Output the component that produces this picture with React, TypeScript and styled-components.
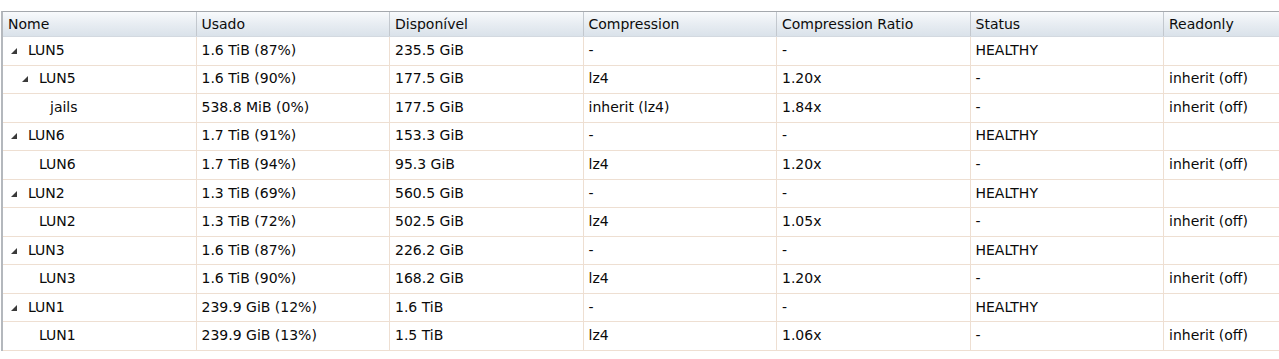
import React from "react";
import styled, { createGlobalStyle } from "styled-components";

type Node = {
  name: string;
  level: number;
  expandable: boolean;
  used: string;
  avail: string;
  compression: string;
  ratio: string;
  status: string;
  readonly: string;
};

const rows: Node[] = [
  { name: "LUN5", level: 0, expandable: true, used: "1.6 TiB (87%)", avail: "235.5 GiB", compression: "-", ratio: "-", status: "HEALTHY", readonly: "" },
  { name: "LUN5", level: 1, expandable: true, used: "1.6 TiB (90%)", avail: "177.5 GiB", compression: "lz4", ratio: "1.20x", status: "-", readonly: "inherit (off)" },
  { name: "jails", level: 2, expandable: false, used: "538.8 MiB (0%)", avail: "177.5 GiB", compression: "inherit (lz4)", ratio: "1.84x", status: "-", readonly: "inherit (off)" },
  { name: "LUN6", level: 0, expandable: true, used: "1.7 TiB (91%)", avail: "153.3 GiB", compression: "-", ratio: "-", status: "HEALTHY", readonly: "" },
  { name: "LUN6", level: 1, expandable: false, used: "1.7 TiB (94%)", avail: "95.3 GiB", compression: "lz4", ratio: "1.20x", status: "-", readonly: "inherit (off)" },
  { name: "LUN2", level: 0, expandable: true, used: "1.3 TiB (69%)", avail: "560.5 GiB", compression: "-", ratio: "-", status: "HEALTHY", readonly: "" },
  { name: "LUN2", level: 1, expandable: false, used: "1.3 TiB (72%)", avail: "502.5 GiB", compression: "lz4", ratio: "1.05x", status: "-", readonly: "inherit (off)" },
  { name: "LUN3", level: 0, expandable: true, used: "1.6 TiB (87%)", avail: "226.2 GiB", compression: "-", ratio: "-", status: "HEALTHY", readonly: "" },
  { name: "LUN3", level: 1, expandable: false, used: "1.6 TiB (90%)", avail: "168.2 GiB", compression: "lz4", ratio: "1.20x", status: "-", readonly: "inherit (off)" },
  { name: "LUN1", level: 0, expandable: true, used: "239.9 GiB (12%)", avail: "1.6 TiB", compression: "-", ratio: "-", status: "HEALTHY", readonly: "" },
  { name: "LUN1", level: 1, expandable: false, used: "239.9 GiB (13%)", avail: "1.5 TiB", compression: "lz4", ratio: "1.06x", status: "-", readonly: "inherit (off)" },
];

const columns = ["Nome", "Usado", "Disponível", "Compression", "Compression Ratio", "Status", "Readonly"];

const GlobalStyle = createGlobalStyle`
  html, body {
    margin: 0;
    padding: 0;
    background: #fff;
    overflow: hidden;
  }
  body {
    font-family: "DejaVu Sans", Verdana, sans-serif;
    font-size: 14px;
    color: #0a0a0a;
  }
`;

const Wrapper = styled.div`
  padding-top: 11px;
  padding-left: 1px;
`;

const Grid = styled.div`
  border-left: 2px solid #b4b8bd;
  border-top: 1px solid #a4a8ad;
  width: 1278px;
`;

const template = "repeat(6, 193.5px) 1fr";

const HeaderRow = styled.div`
  display: grid;
  grid-template-columns: ${template};
  height: 24px;
  background: linear-gradient(to bottom, #f8fafc 0%, #e9eef3 45%, #dae2ea 100%);
  border-bottom: 1px solid #d3d9e0;
`;

const HeaderCell = styled.div`
  display: flex;
  align-items: center;
  padding-left: 5px;
  padding-bottom: 1px;
  border-right: 1px solid #c3c8ce;
  white-space: nowrap;
  overflow: hidden;
  color: #0c0c0c;

  &:last-child {
    border-right: none;
  }
`;

const Row = styled.div`
  display: grid;
  grid-template-columns: ${template};
  height: 28.55px;
  box-sizing: border-box;
  border-bottom: 1px solid #eedfd2;
`;

const Cell = styled.div`
  display: flex;
  align-items: center;
  padding-left: 5px;
  padding-bottom: 2px;
  border-right: 1px solid #eedfd2;
  white-space: nowrap;
  overflow: hidden;

  &:last-child {
    border-right: none;
  }
`;

const TreeCell = styled(Cell)<{ $level: number }>`
  padding-left: ${(p) => 8 + p.$level * 11}px;
`;

const Expander = styled.span`
  display: inline-flex;
  width: 17px;
  flex: none;
  align-items: center;
  padding-top: 2px;
`;

const Triangle = () => (
  <svg width="6" height="6" viewBox="0 0 6 6">
    <polygon points="6,0 6,6 0,6" fill="#3a3a3a" />
  </svg>
);

const App: React.FC = () => {
  return (
    <Wrapper>
      <GlobalStyle />
      <Grid>
        <HeaderRow>
          {columns.map((c) => (
            <HeaderCell key={c}>{c}</HeaderCell>
          ))}
        </HeaderRow>
        {rows.map((r, i) => (
          <Row key={i}>
            <TreeCell $level={r.level}>
              <Expander>{r.expandable && <Triangle />}</Expander>
              {r.name}
            </TreeCell>
            <Cell>{r.used}</Cell>
            <Cell>{r.avail}</Cell>
            <Cell>{r.compression}</Cell>
            <Cell>{r.ratio}</Cell>
            <Cell>{r.status}</Cell>
            <Cell>{r.readonly}</Cell>
          </Row>
        ))}
      </Grid>
    </Wrapper>
  );
};

export default App;
